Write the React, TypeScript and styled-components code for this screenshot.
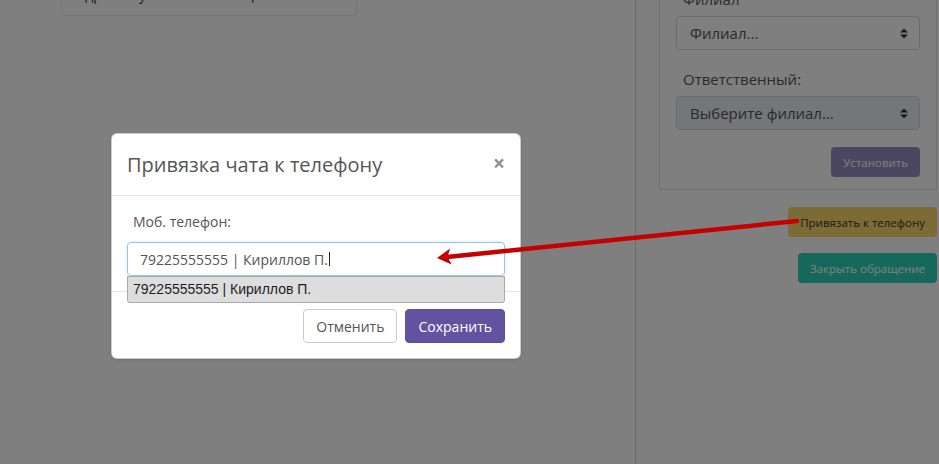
import React from 'react'
import styled, { createGlobalStyle } from 'styled-components'

const GlobalStyle = createGlobalStyle`
	* {
		box-sizing: border-box;
	}
	body {
		margin: 0;
		background: #fff;
		font-family: 'Open Sans', 'Liberation Sans', sans-serif;
		color: #555;
		overflow: hidden;
	}
`

const Screen = styled.div`
	position: relative;
	width: 939px;
	height: 464px;
	overflow: hidden;
	background: #fff;
`

const Layout = styled.div`
	display: grid;
	grid-template-columns: 636px 1fr;
	height: 100%;
`

const ChatColumn = styled.div`
	border-right: 1px solid #d4d4d4;
	padding-left: 61px;
`

const MessageCard = styled.div`
	width: 296px;
	margin-top: -26px;
	padding: 10px 15px;
	border: 1px solid #e6e6e6;
	border-radius: 5px;
	font-size: 14px;
	line-height: 20px;
	color: #333;
`

const SideColumn = styled.div`
	display: flex;
	flex-direction: column;
	padding: 0 2px 0 23px;
`

const Panel = styled.div`
	margin-top: -31px;
	padding: 18px 16px 12px;
	border: 1px solid #dedede;
`

const Field = styled.div<{ $spaced?: boolean }>`
	margin-top: ${({ $spaced }) => ($spaced ? '18px' : '0')};
`

const FieldLabel = styled.div`
	padding-left: 7px;
	margin-bottom: 6px;
	font-size: 15px;
	line-height: 22px;
	color: #555;
`

const Select = styled.div<{ $disabled?: boolean }>`
	display: flex;
	align-items: center;
	justify-content: space-between;
	height: 34px;
	padding: 0 11px 0 13px;
	border: 1px solid #d6d6d6;
	border-radius: 4px;
	background: ${({ $disabled }) => ($disabled ? '#e9ecef' : '#fff')};
	font-size: 15px;
	color: #555;
`

const PanelFooter = styled.div`
	display: flex;
	justify-content: flex-end;
	margin-top: 17px;
`

const TONES = {
	primary: { bg: '#6353a0', fg: '#fff' },
	warning: { bg: '#fad66c', fg: '#333' },
	success: { bg: '#2ed1b9', fg: '#fff' }
}

const SmallButton = styled.button<{ $tone: keyof typeof TONES; $muted?: boolean }>`
	height: 30px;
	padding: 0 12px;
	border: none;
	border-radius: 4px;
	background: ${({ $tone }) => TONES[$tone].bg};
	color: ${({ $tone }) => TONES[$tone].fg};
	opacity: ${({ $muted }) => ($muted ? 0.65 : 1)};
	font-family: 'Open Sans', sans-serif;
	font-size: 11.5px;
	font-weight: 400;
`

const Actions = styled.div`
	display: flex;
	flex-direction: column;
	align-items: flex-end;
	gap: 16px;
	margin-top: 17px;
`

const Backdrop = styled.div`
	position: absolute;
	inset: 0;
	background: rgba(0, 0, 0, 0.5);
`

const Dialog = styled.div`
	position: absolute;
	left: 111px;
	top: 133px;
	width: 410px;
	background: #fff;
	border: 1px solid rgba(0, 0, 0, 0.2);
	border-radius: 6px;
	box-shadow: 0 1px 3px rgba(0, 0, 0, 0.15);
`

const DialogHeader = styled.div`
	display: flex;
	align-items: center;
	justify-content: space-between;
	padding: 15px;
	border-bottom: 1px solid #e5e5e5;
`

const DialogTitle = styled.h4`
	margin: 0;
	font-size: 20px;
	font-weight: 400;
	line-height: 31px;
	color: #555;
`

const CloseButton = styled.span`
	font-size: 21px;
	font-weight: 700;
	line-height: 1;
	color: #8f8f8f;
	margin-top: -3px;
`

const DialogBody = styled.div`
	padding: 15px;
`

const BodyLabel = styled.div`
	padding-left: 6px;
	margin-bottom: 9px;
	font-size: 14px;
	line-height: 22px;
	color: #555;
`

const InputWrap = styled.div`
	position: relative;
`

const TextInput = styled.div`
	display: flex;
	align-items: center;
	height: 34px;
	padding: 0 12px;
	border: 1px solid #9cc4e8;
	border-radius: 4px;
	box-shadow: 0 0 3px rgba(102, 175, 233, 0.35);
	font-size: 14px;
	color: #555;
`

const Caret = styled.span`
	width: 1px;
	height: 14px;
	margin-left: 1px;
	background: #222;
`

const Suggestions = styled.div`
	position: absolute;
	top: 100%;
	left: 0;
	right: 0;
	z-index: 2;
	height: 27px;
	padding-left: 5px;
	border: 1px solid #a9a9a9;
	border-radius: 0 0 3px 3px;
	background: #ddd;
	font-family: 'Liberation Sans', Arial, sans-serif;
	font-size: 14px;
	line-height: 25px;
	color: #1e1e1e;
`

const DialogFooter = styled.div`
	display: flex;
	justify-content: flex-end;
	gap: 8px;
	padding: 17px 15px 15px;
	border-top: 1px solid #e5e5e5;
`

const DialogButton = styled.button<{ $primary?: boolean }>`
	height: 34px;
	padding: 0 12px;
	border: 1px solid ${({ $primary }) => ($primary ? '#5d4f9a' : '#ccc')};
	border-radius: 4px;
	background: ${({ $primary }) => ($primary ? '#6153a0' : '#fff')};
	color: ${({ $primary }) => ($primary ? '#fff' : '#555')};
	font-family: 'Open Sans', sans-serif;
	font-size: 14px;
`

const ArrowLayer = styled.svg`
	position: absolute;
	left: 0;
	top: 0;
	pointer-events: none;
`

const SelectArrows = () => (
	<svg width="8" height="11" viewBox="0 0 8 11">
		<path d="M0 4.5 L4 0.5 L8 4.5 Z M0 6.5 L4 10.5 L8 6.5 Z" fill="#333" />
	</svg>
)

export default function App() {
	return (
		<Screen>
			<GlobalStyle />
			<Layout>
				<ChatColumn>
					<MessageCard>Здравствуйте. Тест сообщения.</MessageCard>
				</ChatColumn>
				<SideColumn>
					<Panel>
						<Field>
							<FieldLabel>Филиал</FieldLabel>
							<Select>
								Филиал...
								<SelectArrows />
							</Select>
						</Field>
						<Field $spaced>
							<FieldLabel>Ответственный:</FieldLabel>
							<Select $disabled>
								Выберите филиал...
								<SelectArrows />
							</Select>
						</Field>
						<PanelFooter>
							<SmallButton $tone="primary" $muted>
								Установить
							</SmallButton>
						</PanelFooter>
					</Panel>
					<Actions>
						<SmallButton $tone="warning">Привязать к телефону</SmallButton>
						<SmallButton $tone="success">Закрыть обращение</SmallButton>
					</Actions>
				</SideColumn>
			</Layout>

			<Backdrop />

			<Dialog>
				<DialogHeader>
					<DialogTitle>Привязка чата к телефону</DialogTitle>
					<CloseButton>×</CloseButton>
				</DialogHeader>
				<DialogBody>
					<BodyLabel>Моб. телефон:</BodyLabel>
					<InputWrap>
						<TextInput>
							79225555555 | Кириллов П.
							<Caret />
						</TextInput>
						<Suggestions>79225555555 | Кириллов П.</Suggestions>
					</InputWrap>
				</DialogBody>
				<DialogFooter>
					<DialogButton>Отменить</DialogButton>
					<DialogButton $primary>Сохранить</DialogButton>
				</DialogFooter>
			</Dialog>

			<ArrowLayer width="939" height="464" viewBox="0 0 939 464">
				<line x1="797" y1="221" x2="447" y2="257" stroke="#c40000" strokeWidth="4.5" strokeLinecap="round" />
				<polygon points="437,258 450.1,248.6 447.5,257 451.7,264.6" fill="#c40000" />
			</ArrowLayer>
		</Screen>
	)
}
